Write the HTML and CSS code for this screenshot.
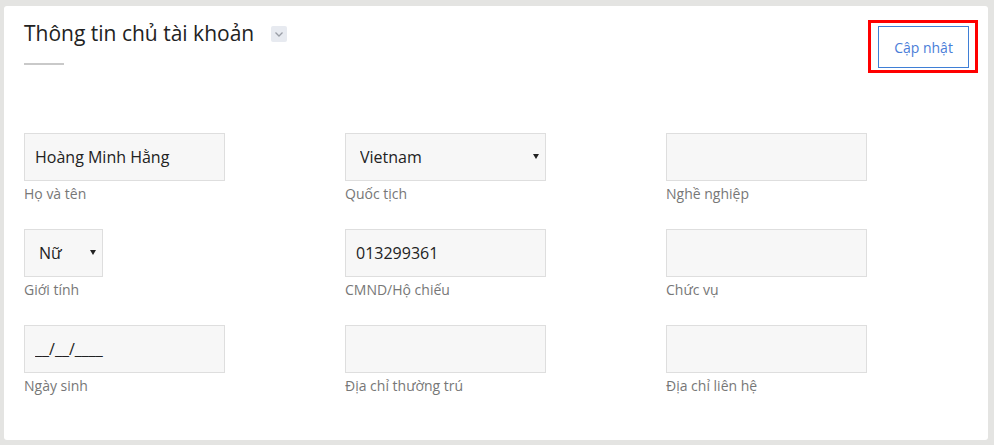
FILE: index.html
```html
<!DOCTYPE html>
<html lang="vi">
<head>
  <meta charset="UTF-8" />
  <meta name="viewport" content="width=device-width, initial-scale=1.0"/>
  <title>Thông tin chủ tài khoản</title>
  <link rel="stylesheet" href="styles.css">
</head>
<body>
  <div class="card">
    <div class="card-head">
      <div>
        <h2 class="title">Thông tin chủ tài khoản
          <span class="toggle">
            <svg width="16" height="16" viewBox="0 0 16 16"><path d="M4.5 6.5 L8 10 L11.5 6.5" fill="none" stroke="#9a9ea6" stroke-width="1.3"/></svg>
          </span>
        </h2>
        <div class="title-line"></div>
      </div>
      <div class="highlight">
        <button class="btn-update">Cập nhật</button>
      </div>
    </div>

    <div class="form-grid">
      <div class="field">
        <input class="box" type="text" value="Hoàng Minh Hằng" />
        <label>Họ và tên</label>
      </div>
      <div class="field">
        <div class="select-wrap">
          <select class="box select">
            <option>Vietnam</option>
          </select>
          <span class="caret"></span>
        </div>
        <label>Quốc tịch</label>
      </div>
      <div class="field">
        <input class="box" type="text" value="" />
        <label>Nghề nghiệp</label>
      </div>

      <div class="field">
        <div class="select-wrap small">
          <select class="box select">
            <option>Nữ</option>
          </select>
          <span class="caret"></span>
        </div>
        <label>Giới tính</label>
      </div>
      <div class="field">
        <input class="box" type="text" value="013299361" />
        <label>CMND/Hộ chiếu</label>
      </div>
      <div class="field">
        <input class="box" type="text" value="" />
        <label>Chức vụ</label>
      </div>

      <div class="field">
        <input class="box" type="text" value="__/__/____" />
        <label>Ngày sinh</label>
      </div>
      <div class="field">
        <input class="box" type="text" value="" />
        <label>Địa chỉ thường trú</label>
      </div>
      <div class="field">
        <input class="box" type="text" value="" />
        <label>Địa chỉ liên hệ</label>
      </div>
    </div>
  </div>
</body>
</html>
```

FILE: styles.css
```css
body {
  margin: 0;
  padding: 6px 6px 5px 4px;
  background-color: #e4e4e2;
  font-family: "Open Sans", Arial, sans-serif;
}

.card {
  background-color: white;
  border-radius: 3px;
  height: 434px;
  box-sizing: border-box;
  padding: 13px 10px 0 20px;
}

.card-head {
  display: flex;
  justify-content: space-between;
  align-items: flex-start;
}

.title {
  margin: 0;
  font-size: 21px;
  font-weight: 400;
  line-height: 28px;
  color: #222;
  display: flex;
  align-items: center;
}

.toggle {
  display: inline-flex;
  width: 16px;
  height: 16px;
  margin-left: 17px;
  margin-top: 2px;
  background-color: #e7eaf0;
  border-radius: 2px;
}

.title-line {
  width: 40px;
  height: 2px;
  background-color: #c9c9c9;
  margin-top: 16px;
}

.highlight {
  border: 3px solid #f00;
  padding: 3px 6px 2px 7px;
  margin-top: 1px;
}

.btn-update {
  display: block;
  width: 91px;
  height: 42px;
  background-color: white;
  border: 1px solid #3f7fd6;
  color: #4a7dd8;
  font-family: "Open Sans", Arial, sans-serif;
  font-size: 14px;
  cursor: pointer;
}

.form-grid {
  display: grid;
  grid-template-columns: 201px 201px 201px;
  column-gap: 120px;
  row-gap: 24px;
  margin-top: 60px;
}

.field {
  height: 72px;
}

.box {
  display: block;
  width: 201px;
  height: 48px;
  box-sizing: border-box;
  margin: 0;
  padding: 0 10px;
  background-color: #f7f7f7;
  border: 1px solid #dedede;
  border-radius: 0;
  font-family: "Open Sans", Arial, sans-serif;
  font-size: 16px;
  color: #222;
  outline: none;
}

.select-wrap {
  position: relative;
  width: 201px;
}

.select-wrap.small {
  width: 79px;
}

.select {
  width: 100%;
  padding-left: 14px;
  -webkit-appearance: none;
  appearance: none;
}

.caret {
  position: absolute;
  right: 7px;
  top: 21px;
  width: 0;
  height: 0;
  border-left: 3px solid transparent;
  border-right: 3px solid transparent;
  border-top: 5px solid #222;
}

label {
  display: block;
  margin-top: 3px;
  font-size: 14px;
  line-height: 20px;
  color: #777;
}
```
